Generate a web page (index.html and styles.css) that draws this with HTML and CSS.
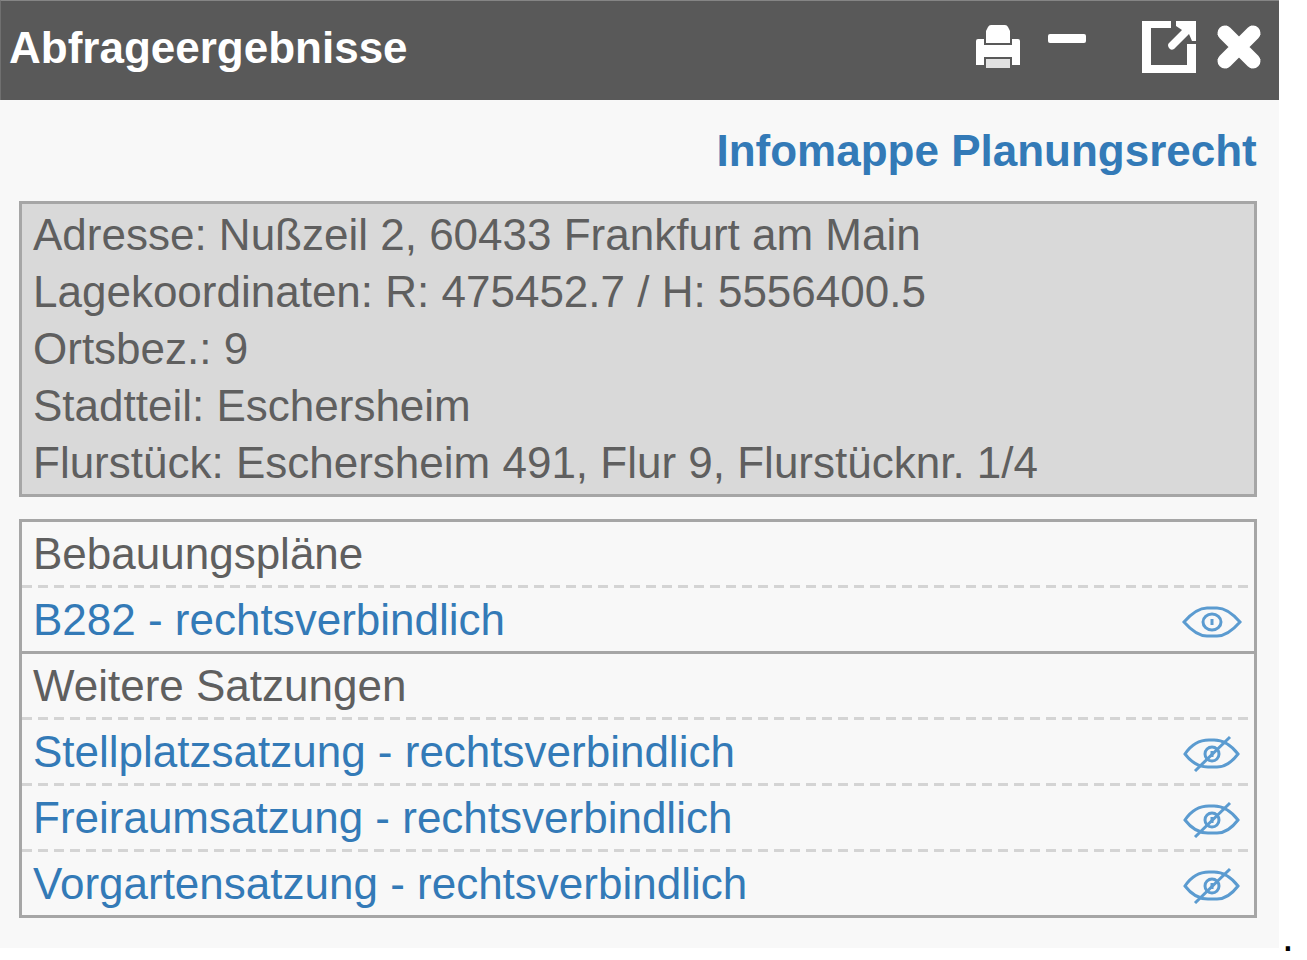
FILE: index.html
```
<!DOCTYPE html>
<html lang="de">
<head>
<meta charset="utf-8">
<title>Abfrageergebnisse</title>
<link rel="stylesheet" href="styles.css">
</head>
<body>
<svg class="symbols" aria-hidden="true">
  <symbol id="eye" viewBox="0 -2 60 40">
    <path d="M2 20C9 12 16 6 25 6h10c9 0 16 6 23 14-7 8-14 14-23 14H25C16 34 9 28 2 20Z"/>
    <ellipse cx="30" cy="20" rx="9" ry="8"/>
    <path d="M30 17v6"/>
  </symbol>
  <symbol id="eye-off" viewBox="0 -3 60 40">
    <path d="M3 19C9 10 17 5 27 5h5c9 0 17 5 24 14-6 8-13 13-21 13H26C17 32 9 27 3 19Z"/>
    <ellipse cx="30" cy="19" rx="7" ry="7"/>
    <path d="M30 16v6"/>
    <path d="M13 36 48 2"/>
  </symbol>
</svg>
<div class="page">
  <main class="panel">
    <header class="titlebar">
      <h1 class="title">Abfrageergebnisse</h1>
      <div class="tools">
        <button class="tool tool-print" aria-label="Drucken">
          <svg width="46" height="46" viewBox="0 0 46 46">
            <path fill="#fff" d="M13 3q1-2 3-2h14q2 0 3 2l2 4v12H11V7ZM1 17q0-2 2-2h6v6h28v-6h6q2 0 2 2v24h-8v-8H9v8H1Z"/>
            <path fill="#e2e2e2" d="M11 35h24v9H11Z"/>
          </svg>
        </button>
        <button class="tool tool-min" aria-label="Minimieren">
          <svg width="38" height="46" viewBox="0 0 38 46"><rect x="0" y="10" width="38" height="9" rx="2" fill="#fff"/></svg>
        </button>
        <button class="tool tool-open" aria-label="In neuem Fenster öffnen">
          <svg width="56" height="56" viewBox="0 0 56 56">
            <path fill="#fff" d="M1 2h29v7H10v37h36V25h9v29H1ZM35 2h20v20h-4l-3-7-15 15q-3 2-5-1t0-5l13-13-6-4Z"/>
          </svg>
        </button>
        <button class="tool" aria-label="Schließen">
          <svg width="48" height="48" viewBox="0 0 48 48">
            <path fill="none" stroke="#fff" stroke-width="15" stroke-linecap="round" d="M10 10 38 38M38 10 10 38"/>
            <path fill="none" stroke="#fff" stroke-width="13" d="M7 7 41 41M41 7 7 41"/>
          </svg>
        </button>
      </div>
    </header>
    <div class="content">
      <nav class="topnav"><a class="info-link" href="#">Infomappe Planungsrecht</a></nav>
      <section class="address">
        <p>Adresse: Nußzeil 2, 60433 Frankfurt am Main</p>
        <p>Lagekoordinaten: R: 475452.7 / H: 5556400.5</p>
        <p>Ortsbez.: 9</p>
        <p>Stadtteil: Eschersheim</p>
        <p>Flurstück: Eschersheim 491, Flur 9, Flurstücknr. 1/4</p>
      </section>
      <section class="results">
        <h2 class="row">Bebauungspläne</h2>
        <div class="row row-end"><a href="#">B282 - rechtsverbindlich</a><button class="eye" aria-label="B282 ausblenden"><svg width="60" height="40"><use href="#eye"/></svg></button></div>
        <h2 class="row">Weitere Satzungen</h2>
        <div class="row"><a href="#">Stellplatzsatzung - rechtsverbindlich</a><button class="eye" aria-label="Stellplatzsatzung einblenden"><svg width="60" height="40"><use href="#eye-off"/></svg></button></div>
        <div class="row"><a href="#">Freiraumsatzung - rechtsverbindlich</a><button class="eye" aria-label="Freiraumsatzung einblenden"><svg width="60" height="40"><use href="#eye-off"/></svg></button></div>
        <div class="row row-end"><a href="#">Vorgartensatzung - rechtsverbindlich</a><button class="eye" aria-label="Vorgartensatzung einblenden"><svg width="60" height="40"><use href="#eye-off"/></svg></button></div>
      </section>
    </div>
  </main>
  <span class="dot">.</span>
</div>
</body>
</html>
```
FILE: styles.css
```
* { box-sizing: border-box; }
body {
  margin: 0;
  background: #fff;
  color: #5f5f5f;
  font-family: "Liberation Sans", Arial, sans-serif;
  font-size: 44px;
}
h1, h2, p { margin: 0; font-size: inherit; }
a { color: #337ab7; text-decoration: none; }
button { padding: 0; border: 0; background: none; cursor: pointer; }
svg { display: block; }
.symbols { position: absolute; width: 0; height: 0; }
.page { display: flex; align-items: flex-end; gap: 3px; padding-right: 13px; }
.panel { flex: 1; margin-bottom: 10px; background: #f8f8f8; }
.dot { color: #000; line-height: 44px; }

.titlebar {
  display: flex;
  align-items: flex-start;
  justify-content: space-between;
  height: 100px;
  padding: 18px 16px 0 8px;
  border-top: 1px solid #858585;
  border-left: 1px solid #707070;
  background: #595959;
  color: #fff;
}
.title { line-height: 57px; }
.tools { display: flex; align-items: center; }
.tool-print { margin-right: 27px; }
.tool-min { margin-right: 55px; }
.tool-open { margin-right: 18px; }

.content { padding: 22px 22px 30px 19px; }
.topnav { line-height: 57px; text-align: right; }
.info-link { font-weight: bold; }
.address {
  margin-top: 22px;
  padding: 2px 11px 3px;
  border: 3px solid #a6a6a6;
  background: #d9d9d9;
  line-height: 57px;
}
.results { margin-top: 22px; border: 3px solid #a6a6a6; border-bottom: 0; }
.row {
  display: flex;
  align-items: center;
  justify-content: space-between;
  padding: 0 12px 3px 11px;
  background: repeating-linear-gradient(to right, #d4d4d4 0 10px, transparent 10px 16px) bottom / 100% 3px no-repeat;
  font-weight: normal;
  line-height: 63px;
}
.row-end { padding-bottom: 0; border-bottom: 3px solid #a6a6a6; background: none; }
.eye svg { fill: none; stroke: #5b9bd0; stroke-width: 3; }
```
